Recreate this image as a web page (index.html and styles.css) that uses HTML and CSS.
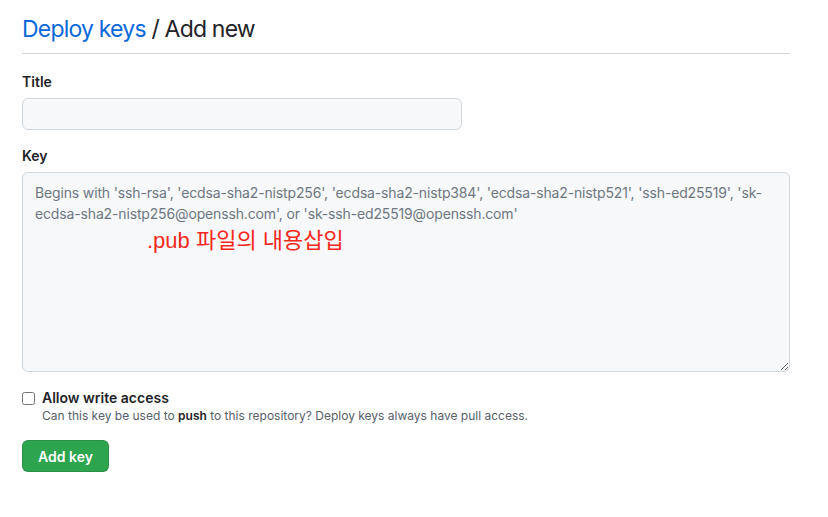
FILE: index.html
```html
<!DOCTYPE html>
<html>
<head>
<meta charset="utf-8">
<link rel="stylesheet" href="styles.css">
</head>
<body>
<div class="page">
  <h2 class="subhead"><a class="crumb" href="#">Deploy keys</a> / Add new</h2>
  <form class="form">
    <div class="group">
      <label class="label">Title</label>
      <input class="input title-input" type="text">
    </div>
    <div class="group">
      <label class="label">Key</label>
      <div class="key-wrap">
        <textarea class="input key-input" placeholder="Begins with 'ssh-rsa', 'ecdsa-sha2-nistp256', 'ecdsa-sha2-nistp384', 'ecdsa-sha2-nistp521', 'ssh-ed25519', 'sk-ecdsa-sha2-nistp256@openssh.com', or 'sk-ssh-ed25519@openssh.com'"></textarea>
        <span class="note-red">.pub 파일의 내용삽입</span>
      </div>
    </div>
    <div class="check">
      <input class="checkbox" type="checkbox">
      <div class="check-text">
        <div class="check-label">Allow write access</div>
        <div class="check-note">Can this key be used to <b>push</b> to this repository? Deploy keys always have pull access.</div>
      </div>
    </div>
    <button class="btn" type="button">Add key</button>
  </form>
</div>
</body>
</html>
```
FILE: styles.css
```css
html, body {
  margin: 0;
  padding: 0;
  background: #ffffff;
}
body {
  font-family: Inter, "Liberation Sans", "Noto Sans CJK KR", sans-serif;
  color: #1f2328;
}
.page {
  padding: 13px 38px 0 22px;
}
.subhead {
  margin: 0;
  font-size: 23px;
  font-weight: 400;
  line-height: 32px;
  letter-spacing: -0.8px;
  padding-bottom: 8px;
  border-bottom: 1px solid #d0d7de;
  color: #1f2328;
}
.crumb {
  color: #0969da;
  text-decoration: none;
}
.form {
  padding-top: 18px;
}
.group {
  margin-bottom: 16px;
}
.group + .group {
  margin-bottom: 17px;
}
.label {
  display: block;
  font-size: 14px;
  font-weight: 600;
  line-height: 20px;
  margin-bottom: 6px;
}
.input {
  box-sizing: border-box;
  background: #f6f8fa;
  border: 1px solid #d0d7de;
  border-radius: 6px;
  font-family: inherit;
  font-size: 14px;
  color: #1f2328;
  outline: none;
}
.title-input {
  display: block;
  width: 440px;
  height: 32px;
  padding: 5px 12px;
}
.key-wrap {
  position: relative;
}
.key-input {
  display: block;
  width: 100%;
  height: 200px;
  padding: 9px 12px;
  line-height: 21px;
  letter-spacing: -0.15px;
  resize: vertical;
}
.key-input::placeholder {
  color: #6e7781;
  opacity: 1;
}
.note-red {
  position: absolute;
  left: 125px;
  top: 56px;
  font-size: 22px;
  line-height: 26px;
  color: #f5281c;
  font-family: "Liberation Sans", "Noto Sans CJK KR", sans-serif;
}
.check {
  display: flex;
  align-items: flex-start;
  gap: 7px;
  margin-top: -1px;
}
.checkbox {
  margin: 4px 0 0 0;
  width: 13px;
  height: 13px;
}
.check-label {
  font-size: 14px;
  font-weight: 600;
  line-height: 20px;
}
.check-note {
  font-size: 12px;
  line-height: 16px;
  color: #57606a;
}
.check-note b {
  color: #1f2328;
  font-weight: 600;
}
.btn {
  margin-top: 16px;
  width: 87px;
  height: 32px;
  background: #2da44e;
  color: #ffffff;
  border: 1px solid rgba(27,31,36,0.15);
  border-radius: 6px;
  font-family: inherit;
  font-size: 14px;
  font-weight: 600;
  padding: 0;
}
```
